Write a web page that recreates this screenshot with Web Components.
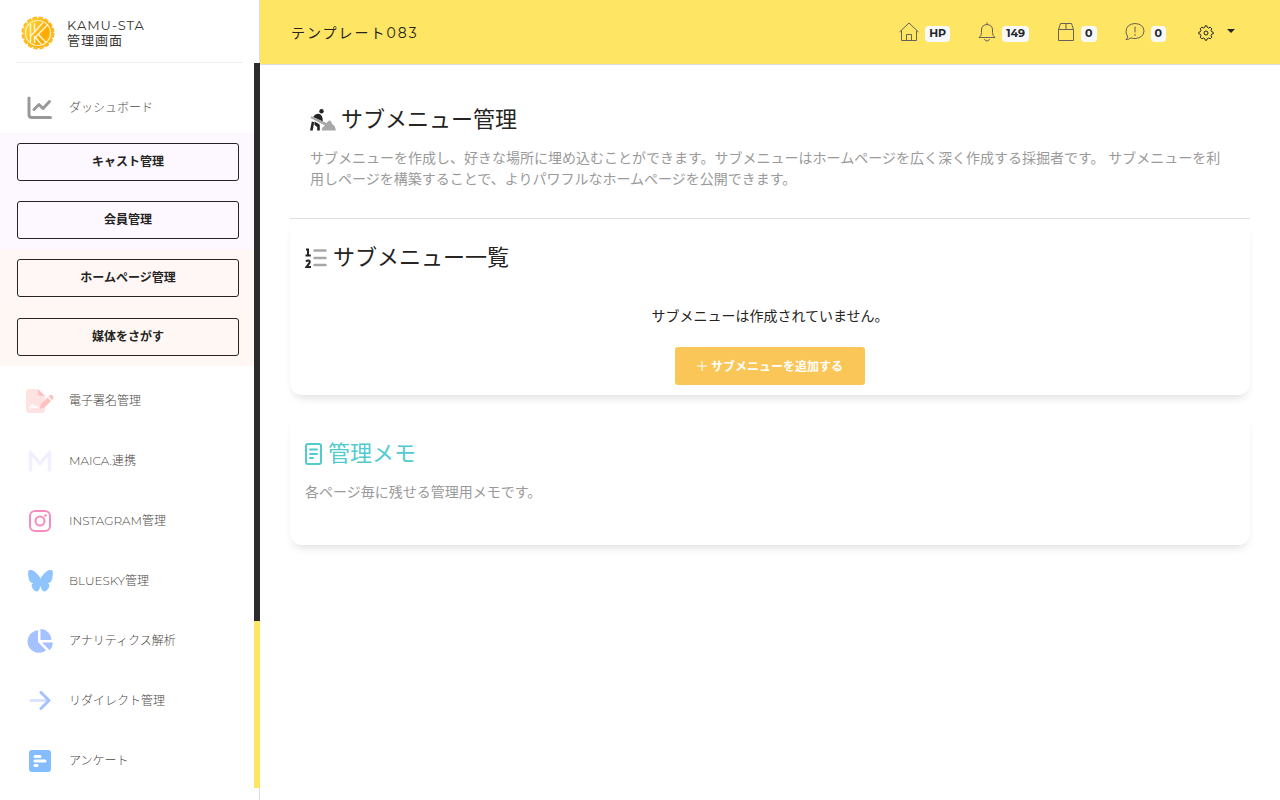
<!DOCTYPE html>
<html lang="ja">
<head>
<meta charset="utf-8">
<meta name="viewport" content="width=device-width, initial-scale=1">
<title>サブメニュー管理</title>
<style>
  body {
    margin: 0;
    background: #fff;
    color: #252422;
    font-family: Montserrat, Inter, "Noto Sans CJK JP", sans-serif;
    font-size: 14px;
    line-height: 21px;
  }
</style>
</head>
<body>
<admin-app>
  <side-bar slot="side">
    <side-link icon="chart">ダッシュボード</side-link>
    <side-group tone="violet">キャスト管理</side-group>
    <side-group tone="violet">会員管理</side-group>
    <side-group tone="rose">ホームページ管理</side-group>
    <side-group tone="peach">媒体をさがす</side-group>
    <side-link icon="sign">電子署名管理</side-link>
    <side-link icon="maica">MAICA.連携</side-link>
    <side-link icon="instagram">INSTAGRAM管理</side-link>
    <side-link icon="bluesky">BLUESKY管理</side-link>
    <side-link icon="pie">アナリティクス解析</side-link>
    <side-link icon="arrow">リダイレクト管理</side-link>
    <side-link icon="poll">アンケート</side-link>
  </side-bar>

  <top-bar slot="top" site="テンプレート083">
    <top-item icon="home">HP</top-item>
    <top-item icon="bell">149</top-item>
    <top-item icon="box">0</top-item>
    <top-item icon="chat">0</top-item>
  </top-bar>

  <page-intro heading="サブメニュー管理">サブメニューを作成し、好きな場所に埋め込むことができます。サブメニューはホームページを広く深く作成する採掘者です。 サブメニューを利用しページを構築することで、よりパワフルなホームページを公開できます。</page-intro>

  <panel-card icon="list" heading="サブメニュー一覧">
    <empty-list action="サブメニューを追加する">サブメニューは作成されていません。</empty-list>
  </panel-card>

  <panel-card icon="memo" heading="管理メモ" tone="teal">
    <memo-note>各ページ毎に残せる管理用メモです。</memo-note>
  </panel-card>
</admin-app>

<script>
const ICONS = {
  chart: `<svg width="26" height="24" viewBox="0 0 26 24" fill="none" stroke="#999" stroke-linecap="round" stroke-linejoin="round"><path d="M2 2v16.500q0 3 3 3H23.500" stroke-width="3"/><path d="M7 13.500l5-5 4 4 6.500-7" stroke-width="3"/></svg>`,
  sign: `<svg width="28" height="24" viewBox="0 0 28 24"><path fill="#ffe3e3" d="M3 0h9v5q0 2 2 2h5v14q0 3-3 3H3q-3 0-3-3V3q0-3 3-3z"/><path fill="#ffc0c0" d="M12 0l7 7h-5q-2 0-2-2zM15 15l6.500-6.500 3.500 3.500-6.500 6.500-5 1.500zM22.500 7.500l1-1q1.500-1.500 3.200.2t.3 3.300l-1 1z"/><path fill="none" stroke="#fff" stroke-width="1.500" stroke-linecap="round" d="M4 19.500q2-5 3-3.500t0 3q2-2 3-1.500t2 1.500"/></svg>`,
  maica: `<svg width="24" height="24" viewBox="0 0 24 24" fill="none" stroke="#f2f0ff" stroke-width="3.500" stroke-linecap="round" stroke-linejoin="round"><path d="M2.500 21V3l9.500 12L21.500 3v18"/></svg>`,
  instagram: `<svg width="22" height="22" viewBox="0 0 22 22" fill="none" stroke="#f58cc0" stroke-width="2"><rect x="1" y="1" width="20" height="20" rx="5"/><circle cx="11" cy="11" r="4.500"/><circle cx="16.500" cy="5.500" r="1.300" fill="#f58cc0" stroke="none"/></svg>`,
  bluesky: `<svg width="25" height="22" viewBox="0 0 25 22" fill="#8fc4ff"><path d="M12.500 8.500C11 5.500 8 2 5 .5 2-.6.200-.2.100 2.500c0 3 .5 6.500 1.400 8.300.8 1.600 2 2.200 3.800 2.400-2 .8-2.300 2.800-.8 5 3.300 5 6.200 3.800 7.500-.7l.5-1.500.5 1.500c1.300 4.500 4.200 5.700 7.500.7 1.500-2.200 1.200-4.200-.8-5 1.800-.2 3-.8 3.800-2.400.9-1.800 1.400-5.300 1.400-8.300C24.800-.2 23-.6 20 .5c-3 1.500-6 5-7.500 8z"/></svg>`,
  pie: `<svg width="26" height="24" viewBox="0 0 26 24" fill="#a6c1ff"><path d="M11 1.300V13l8 8.300A11.300 11.300 0 1 1 11 1.300zM13.500 0A11 11 0 0 1 24.300 11H13.500zM15 13.500H26q-.3 4.700-3.300 7.700z"/></svg>`,
  arrow: `<svg width="22" height="20" viewBox="0 0 22 20" fill="none" stroke-width="3" stroke-linecap="round" stroke-linejoin="round"><path stroke="#d3e0ff" stroke-width="2.500" d="M2 9.500h17"/><path stroke="#a6c1ff" d="M12 1.500l8 8-8 8"/></svg>`,
  poll: `<svg width="22" height="22" viewBox="0 0 22 22"><rect width="22" height="22" rx="3" fill="#85bcff"/><path stroke="#fff" stroke-width="3" stroke-linecap="round" d="M6 6.500h5M6 11h10M6 15.500h2"/></svg>`,
  home: `<svg width="20" height="20" viewBox="0 0 20 20" fill="none" stroke="currentColor" stroke-width="1"><path d="M.5 10L10 1l9.500 9M2.500 8.500v10h15v-10M7.500 18.500v-6h5v6"/></svg>`,
  bell: `<svg width="18" height="20" viewBox="0 0 18 20" fill="none" stroke="currentColor" stroke-width="1"><path d="M9 .5v2M1 15.500h16q-2.500-1.500-2.500-5V8q0-5-5.500-5.500Q3.500 3 3.500 8v2.500q0 3.500-2.500 5zM6.500 17q.5 2 2.500 2t2.500-2"/></svg>`,
  box: `<svg width="18" height="20" viewBox="0 0 18 20" fill="none" stroke="currentColor" stroke-width="1"><path d="M1.500 7.500h15v11h-15zM1.500 7.500l2-6h11l2 6M9 1.500v6"/></svg>`,
  chat: `<svg width="20" height="20" viewBox="0 0 20 20" fill="none" stroke="currentColor" stroke-width="1"><path d="M1 17.500q2-1.500 1.500-3.500Q1 12 1 9.500 1.500 2 10 1.500q8.500.5 9 7.500-.5 7-9 7.500-2.500 0-4-.7-2 1.700-5 1.700zM10 4.500v6M10 12v2"/></svg>`,
  gear: `<svg width="16" height="16" viewBox="0 0 16 16" fill="none" stroke="currentColor" stroke-width="1"><path d="M6.700 2.400L7.200.8h1.600l.5 1.600 1.400.6 1.500-.8 1.600 1.600-.8 1.500.6 1.400 1.600.5v1.600l-1.600.5-.6 1.400.8 1.500-1.600 1.600-1.500-.8-1.400.6-.5 1.600H7.200l-.5-1.600-1.400-.6-1.500.8-1.600-1.600.8-1.500-.6-1.400-1.600-.5V7.200l1.600-.5.6-1.400-.8-1.500 1.600-1.600 1.500.8z"/><circle cx="8" cy="8" r="2"/></svg>`,
  digging: `<svg width="26" height="22" viewBox="0 0 26 22"><circle cx="11.500" cy="2.200" r="2.200" fill="#252422"/><path fill="#252422" d="M3 8Q5.500 4.500 8.500 4.800q3 .5 4 4.200l.3 3.500zM1.800 12.500l2.400.8L2.700 21.500H0zM4.500 12.600l4.500 2.400q1 .8.800 2v4.500H7.200V18l-2.700-2z"/><path fill="#a8a8a8" d="M.5 9l.8-1.800L16.500 14l2.200-2.200q1-.7 2 .2l2.200 4 1.600.8 1.500 4.700H11.500l1-3 2.500-2z"/></svg>`,
  list: `<svg width="22" height="22" viewBox="0 0 22 22" fill="none"><path stroke="#a8a8a8" stroke-width="2.500" stroke-linecap="round" d="M9.500 3.500h11M9.500 11h11M9.500 18h11"/><path stroke="#252422" stroke-width="2" d="M1 2.500h2V9M.5 8.500h5.300M1 14.500q1.500-1.500 3-.8t0 3L1.500 20H6"/></svg>`,
  memo: `<svg width="17" height="22" viewBox="0 0 17 22" fill="none" stroke="currentColor" stroke-width="2"><rect x="1" y="1" width="15" height="20" rx="2"/><path d="M5 6.500h7M5 11h7M5 15h3" stroke-linecap="round"/></svg>`,
  plus: `<svg width="10" height="10" viewBox="0 0 10 10" stroke="currentColor" stroke-width="1"><path d="M5 0v10M0 5h10"/></svg>`,
  logo: `<svg width="34" height="34" viewBox="0 0 34 34" fill="none"><defs><linearGradient id="g" x1="0" y1=".2" x2="1" y2=".8"><stop stop-color="#ffd83a"/><stop offset=".7" stop-color="#ffa800"/><stop offset="1" stop-color="#ffc020"/></linearGradient></defs><circle cx="17" cy="17" r="15" fill="url(#g)"/><circle cx="17" cy="17" r="15.500" stroke="#fdbb22" stroke-width="2" stroke-dasharray="4.500 1.600"/><circle cx="17" cy="17" r="12.500" stroke="#fff3c4" stroke-width="1.200"/><path stroke="#fff5d2" stroke-width="1.500" d="M9.500 8v18M13.500 7v9L22 6.500M13.500 27v-5L27 8.500M13.500 26v-6M17.500 18.500l7.500 8M14.500 21.500l6 7M9.500 20l4-4"/></svg>`
};

class BaseElement extends HTMLElement {
  constructor() {
    super();
    this.attachShadow({ mode: "open" });
  }

  connectedCallback() {
    this.shadowRoot.innerHTML = /* html */`
    <style>
      *, ::before, ::after { box-sizing: border-box; }
      svg { display: block; flex: none; }
      a { color: inherit; text-decoration: none; }
      h1, h2, p { margin: 0; }
      ${this.constructor.styles}
    </style>
    ${this.markup()}
    `;
  }
}

class AdminApp extends BaseElement {
  static get styles() {
    return /* css */`
      :host {
        display: grid;
        grid-template-columns: 260px minmax(0, 1fr);
        height: 100vh;
        overflow: hidden;
      }

      .content {
        display: flex;
        flex-direction: column;
        min-width: 0;
      }

      main {
        display: flex;
        flex-direction: column;
        padding: 40px 30px;
      }
    `;
  }

  markup() {
    return /* html */`
    <slot name="side"></slot>
    <div class="content">
      <slot name="top"></slot>
      <main><slot></slot></main>
    </div>
    `;
  }
}

class SideBar extends BaseElement {
  static get styles() {
    return /* css */`
      :host {
        display: flex;
        flex-direction: column;
        min-height: 0;
        border-right: 1px solid #ddd;
      }

      .brand {
        display: flex;
        align-items: center;
        gap: 12px;
        height: 63px;
        margin: 0 16px;
        padding: 3px 0 0 5px;
        border-bottom: 1px solid #eee;
        color: #3a3835;
        font-size: 13px;
        line-height: 15px;
        letter-spacing: 1px;
      }

      .scroll {
        display: grid;
        grid-template-columns: minmax(0, 1fr) 6px;
        flex: 1;
        min-height: 0;
        margin-right: -1px;
        padding-bottom: 12px;
      }

      nav {
        overflow: hidden;
        padding-top: 18px;
      }

      .track {
        background: #ffe564;
      }

      .thumb {
        height: 77%;
        background: #2c2c2c;
      }
    `;
  }

  markup() {
    return /* html */`
    <a class="brand" href="#">${ICONS.logo}<span>KAMU-STA<br>管理画面</span></a>
    <div class="scroll">
      <nav><slot></slot></nav>
      <div class="track"><div class="thumb"></div></div>
    </div>
    `;
  }
}

class SideLink extends BaseElement {
  static get styles() {
    return /* css */`
      :host {
        display: block;
      }

      a {
        display: grid;
        grid-template-columns: 30px 1fr;
        align-items: center;
        gap: 14px;
        height: 52px;
        margin-bottom: 8px;
        padding-left: 25px;
        color: #4d4945;
        font-size: 12px;
        font-weight: 300;
      }

      :host([icon="chart"]) a {
        margin-bottom: 0;
      }

      svg {
        justify-self: center;
        margin-top: 2px;
      }
    `;
  }

  markup() {
    return /* html */`<a href="#">${ICONS[this.getAttribute("icon")]}<span><slot></slot></span></a>`;
  }
}

class SideGroup extends BaseElement {
  static get styles() {
    return /* css */`
      :host {
        display: flex;
        padding: 10px 15px 10px 17px;
      }

      :host([tone="violet"]) { background: #fdf7ff; }
      :host([tone="rose"]) { background: #fff6f6; }
      :host([tone="peach"]) {
        margin-bottom: 8px;
        padding-top: 11px;
        background: #fff7f3;
      }

      button {
        flex: 1;
        height: 38px;
        padding: 0;
        border: 1px solid #252422;
        border-radius: 3px;
        background: transparent;
        color: #252422;
        font: inherit;
        font-size: 12px;
        font-weight: 700;
        line-height: 18px;
      }
    `;
  }

  markup() {
    return /* html */`<button type="button"><slot></slot></button>`;
  }
}

class TopBar extends BaseElement {
  static get styles() {
    return /* css */`
      :host {
        display: block;
      }

      header {
        display: flex;
        align-items: center;
        justify-content: space-between;
        height: 65px;
        padding: 0 45px 0 31px;
        border-bottom: 1px solid #ddd;
        background: #ffe564;
      }

      .site {
        padding-top: 2px;
        letter-spacing: 2px;
      }

      .tools {
        display: flex;
        align-items: center;
        gap: 28px;
      }

      button {
        display: flex;
        align-items: center;
        gap: 13px;
        padding: 2px 0 0;
        margin-left: 4px;
        border: 0;
        background: none;
        color: #252422;
      }

      .caret {
        border: 4px solid transparent;
        border-top-color: currentColor;
        border-bottom: 0;
        margin-bottom: 4px;
      }
    `;
  }

  markup() {
    return /* html */`
    <header>
      <a class="site" href="#">${this.getAttribute("site")}</a>
      <div class="tools">
        <slot></slot>
        <button type="button" aria-label="設定">${ICONS.gear}<span class="caret"></span></button>
      </div>
    </header>
    `;
  }
}

class TopItem extends BaseElement {
  static get styles() {
    return /* css */`
      :host {
        display: block;
      }

      a {
        display: flex;
        align-items: flex-end;
        gap: 6px;
        height: 20px;
      }

      svg {
        color: #66615b;
      }

      span {
        height: 16px;
        padding: 0 4px;
        border-radius: 4px;
        background: #f8f9fa;
        color: #212529;
        font-size: 11px;
        font-weight: 700;
        line-height: 15px;
      }
    `;
  }

  markup() {
    return /* html */`<a href="#">${ICONS[this.getAttribute("icon")]}<span><slot></slot></span></a>`;
  }
}

class PageIntro extends BaseElement {
  static get styles() {
    return /* css */`
      :host {
        display: block;
        padding: 0 20px 28px;
        border-bottom: 1px solid #ddd;
      }

      h1 {
        display: flex;
        align-items: center;
        gap: 5px;
        margin-bottom: 14px;
        font-size: 22px;
        font-weight: 400;
        line-height: 29px;
      }

      p {
        color: #9a9a9a;
      }
    `;
  }

  markup() {
    return /* html */`
    <h1>${ICONS.digging}${this.getAttribute("heading")}</h1>
    <p><slot></slot></p>
    `;
  }
}

class PanelCard extends BaseElement {
  static get styles() {
    return /* css */`
      :host {
        display: block;
        margin-bottom: 20px;
        padding: 24px 15px 10px;
        border-radius: 12px;
        background: #fff;
        box-shadow: 0 6px 10px -4px rgba(0, 0, 0, .15);
      }

      h2 {
        display: flex;
        align-items: center;
        gap: 6px;
        font-size: 22px;
        font-weight: 400;
        line-height: 30px;
      }

      :host([tone="teal"]) h2 {
        color: #51cbce;
      }
    `;
  }

  markup() {
    return /* html */`
    <h2>${ICONS[this.getAttribute("icon")]}${this.getAttribute("heading")}</h2>
    <slot></slot>
    `;
  }
}

class EmptyList extends BaseElement {
  static get styles() {
    return /* css */`
      :host {
        display: flex;
        flex-direction: column;
        align-items: center;
        gap: 20px;
        padding-top: 33px;
      }

      button {
        display: flex;
        align-items: center;
        gap: 4px;
        height: 38px;
        padding: 0 22px;
        border: 0;
        border-radius: 3px;
        background: #fbc658;
        color: #fff;
        font: inherit;
        font-size: 12px;
        font-weight: 700;
      }
    `;
  }

  markup() {
    return /* html */`
    <p><slot></slot></p>
    <button type="button">${ICONS.plus}${this.getAttribute("action")}</button>
    `;
  }
}

class MemoNote extends BaseElement {
  static get styles() {
    return /* css */`
      :host {
        display: block;
        min-height: 53px;
        padding-top: 13px;
        color: #9a9a9a;
      }
    `;
  }

  markup() {
    return /* html */`<p><slot></slot></p>`;
  }
}

customElements.define("admin-app", AdminApp);
customElements.define("side-bar", SideBar);
customElements.define("side-link", SideLink);
customElements.define("side-group", SideGroup);
customElements.define("top-bar", TopBar);
customElements.define("top-item", TopItem);
customElements.define("page-intro", PageIntro);
customElements.define("panel-card", PanelCard);
customElements.define("empty-list", EmptyList);
customElements.define("memo-note", MemoNote);
</script>
</body>
</html>
